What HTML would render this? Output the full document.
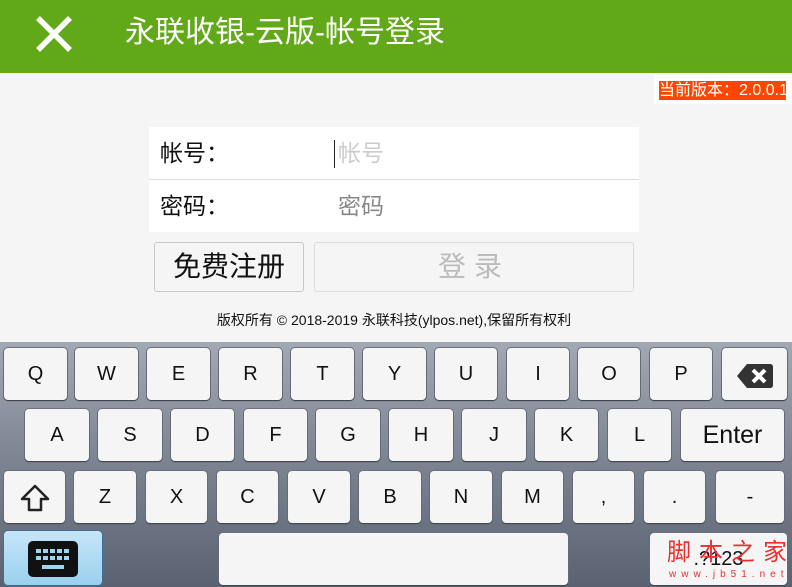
<!DOCTYPE html>
<html><head><meta charset="utf-8"><style>
*{margin:0;padding:0;box-sizing:border-box}
html,body{width:792px;height:587px;overflow:hidden}
body{background:#f5f5f5;font-family:"Liberation Sans","Noto Sans CJK SC",sans-serif;position:relative}
.a{position:absolute;white-space:nowrap}
.hdr{left:0;top:0;width:792px;height:73px;background:#62a919}
.k{position:absolute;height:52px;background:#f5f5f5;border-radius:4px;box-shadow:0 1px 1px #3a3f48,0 0 0 1px #6c7280;font-size:20px;color:#111;text-align:center;line-height:52px}
</style></head><body>
<div class="a hdr">
<svg class="a" style="left:35px;top:15px" width="38" height="38" viewBox="0 0 38 38"><path d="M3 3L35 35M35 3L3 35" stroke="#fff" stroke-width="5.5"/></svg>
<div class="a" style="left:125px;top:13px;font-size:30px;color:#fff;line-height:40px">永联收银-云版-帐号登录</div>
</div>
<div class="a" style="left:654px;top:75px;width:138px;height:29px;background:#fff"></div>
<div class="a" style="left:659px;top:81px;width:127px;height:19px;background:#ff4500;color:#fff;font-size:16px;line-height:19px;overflow:hidden">当前版本：2.0.0.1</div>
<div class="a" style="left:149px;top:127px;width:490px;height:105px;background:#fff"></div>
<div class="a" style="left:149px;top:179px;width:490px;height:1px;background:#ddd"></div>
<div class="a" style="left:160px;top:138px;font-size:23px;line-height:30px;color:#111">帐号：</div>
<div class="a" style="left:160px;top:191px;font-size:23px;line-height:30px;color:#111">密码：</div>
<div class="a" style="left:334px;top:140px;width:1px;height:28px;background:#222"></div>
<div class="a" style="left:338px;top:138px;font-size:23px;line-height:30px;color:#ccc">帐号</div>
<div class="a" style="left:338px;top:191px;font-size:23px;line-height:30px;color:#888">密码</div>
<div class="a" style="left:154px;top:242px;width:150px;height:50px;border:1px solid #c8c8c8;border-radius:3px;background:#f5f5f5;font-size:28px;line-height:48px;text-align:center;color:#111">免费注册</div>
<div class="a" style="left:314px;top:242px;width:320px;height:50px;border:1px solid #ddd;border-radius:3px;background:#f5f5f5;font-size:28px;line-height:48px;text-align:center;color:#bbb;letter-spacing:8px">登录</div>
<div class="a" style="left:0;top:311px;width:788px;text-align:center;font-size:14px;line-height:18px;color:#111">版权所有 © 2018-2019 永联科技(ylpos.net),保留所有权利</div>
<div class="a" style="left:0;top:342px;width:792px;height:245px;background:linear-gradient(#a3a9b3,#7b8290 50%,#5a6271)">
<div class="k" style="left:4px;top:6px;width:63px">Q</div>
<div class="k" style="left:75px;top:6px;width:63px">W</div>
<div class="k" style="left:147px;top:6px;width:63px">E</div>
<div class="k" style="left:219px;top:6px;width:63px">R</div>
<div class="k" style="left:291px;top:6px;width:63px">T</div>
<div class="k" style="left:363px;top:6px;width:63px">Y</div>
<div class="k" style="left:435px;top:6px;width:62px">U</div>
<div class="k" style="left:507px;top:6px;width:62px">I</div>
<div class="k" style="left:578px;top:6px;width:62px">O</div>
<div class="k" style="left:650px;top:6px;width:62px">P</div>
<div class="k" style="left:722px;top:6px;width:65px"><svg style="margin-top:16px" width="36" height="24" viewBox="0 0 36 24"><path d="M10 0H33Q36 0 36 3V21Q36 24 33 24H10L0 12Z" fill="#333"/><path d="M16 6L28 18M28 6L16 18" stroke="#fff" stroke-width="4"/></svg></div>
<div class="k" style="left:25px;top:67px;width:64px">A</div>
<div class="k" style="left:98px;top:67px;width:64px">S</div>
<div class="k" style="left:171px;top:67px;width:63px">D</div>
<div class="k" style="left:244px;top:67px;width:63px">F</div>
<div class="k" style="left:316px;top:67px;width:64px">G</div>
<div class="k" style="left:389px;top:67px;width:64px">H</div>
<div class="k" style="left:462px;top:67px;width:64px">J</div>
<div class="k" style="left:535px;top:67px;width:63px">K</div>
<div class="k" style="left:608px;top:67px;width:63px">L</div>
<div class="k" style="left:681px;top:67px;width:103px;font-size:25px">Enter</div>
<div class="k" style="left:4px;top:129px;width:61px"><svg style="margin-top:13px" width="30" height="28" viewBox="0 0 30 28"><path d="M15 2L28 15H21V26H9V15H2Z" fill="none" stroke="#222" stroke-width="2.5" stroke-linejoin="round"/></svg></div>
<div class="k" style="left:74px;top:129px;width:62px">Z</div>
<div class="k" style="left:146px;top:129px;width:61px">X</div>
<div class="k" style="left:217px;top:129px;width:61px">C</div>
<div class="k" style="left:288px;top:129px;width:62px">V</div>
<div class="k" style="left:359px;top:129px;width:62px">B</div>
<div class="k" style="left:430px;top:129px;width:62px">N</div>
<div class="k" style="left:502px;top:129px;width:61px">M</div>
<div class="k" style="left:573px;top:129px;width:61px">,</div>
<div class="k" style="left:644px;top:129px;width:61px">.</div>
<div class="k" style="left:716px;top:129px;width:68px">-</div>
<div class="k" style="left:4px;top:189px;width:98px;height:54px;background:linear-gradient(#c6e6f8,#9ad0ee);box-shadow:0 0 0 1px #3d6f9a"><svg style="margin-top:10px" width="50" height="36" viewBox="0 0 50 36"><rect width="50" height="36" rx="5" fill="#111"/><g fill="#9fd3ef"><rect x="8" y="8" width="5" height="4"/><rect x="15" y="8" width="5" height="4"/><rect x="22" y="8" width="5" height="4"/><rect x="29" y="8" width="5" height="4"/><rect x="36" y="8" width="5" height="4"/><rect x="8" y="15" width="5" height="4"/><rect x="15" y="15" width="5" height="4"/><rect x="22" y="15" width="5" height="4"/><rect x="29" y="15" width="5" height="4"/><rect x="36" y="15" width="5" height="4"/><rect x="14" y="24" width="22" height="4"/></g></svg></div>
<div class="k" style="left:219px;top:191px;width:349px;height:52px"></div>
<div class="k" style="left:650px;top:191px;width:137px;height:52px;font-size:20px">.?123</div>
</div>
<div class="a" style="left:667px;top:539px;font-size:24px;color:#e83030;letter-spacing:8px;line-height:28px">脚本之家</div>
<div class="a" style="left:669px;top:569px;font-size:10px;line-height:12px;color:#e83030;letter-spacing:5px">www.jb51.net</div>
</body></html>
